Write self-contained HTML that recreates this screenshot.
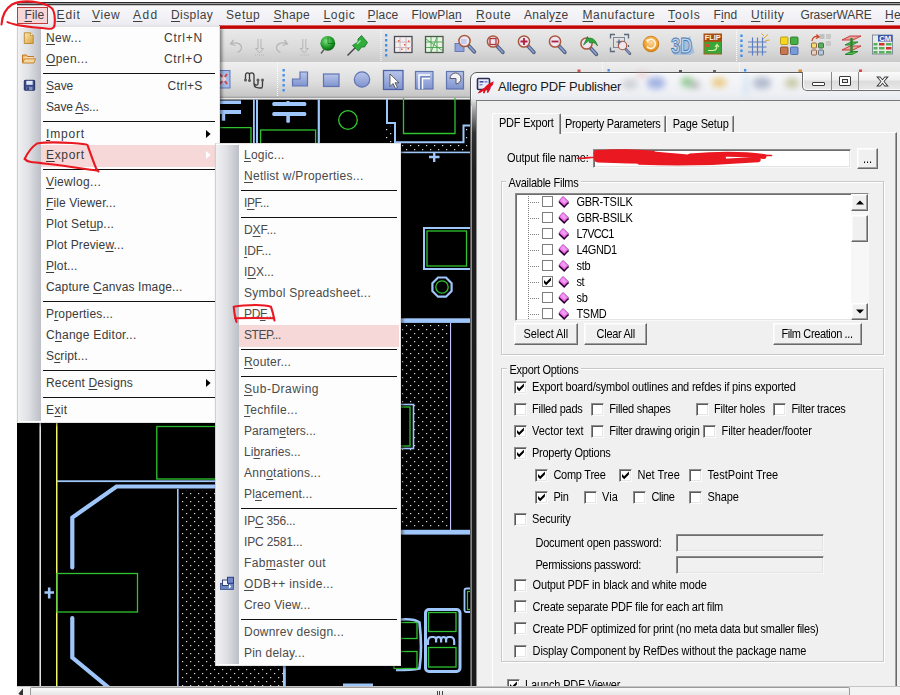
<!DOCTYPE html>
<html lang="en"><head><meta charset="utf-8"><title>Allegro PDF Publisher</title>
<style>

html,body{margin:0;padding:0;background:#fff;}
#root{position:relative;width:900px;height:695px;overflow:hidden;background:#fff;font-family:"Liberation Sans",sans-serif;}
#root div,#root span.t,#root svg{position:absolute;box-sizing:border-box;}
.t{white-space:nowrap;}
.m{font-family:"Liberation Sans",sans-serif;}
.d{font-family:"Liberation Sans",sans-serif;display:inline-block;transform:scaleY(1.12);transform-origin:50% 53%;}
u{text-decoration:underline;text-underline-offset:1.5px;text-decoration-thickness:1px;}
.sep{height:1px;background:#111;}
.cb{width:13px;height:13px;background:#fff;border:1px solid #8c8c8c;border-right-color:#fbfbfb;border-bottom-color:#fbfbfb;box-shadow:inset 1px 1px 0 #5a5a5a, inset -1px -1px 0 #e6e6e6;}
.cbg{background:#f0f0f0;}
.btn{background:#f0f0f0;border:1px solid #fff;border-right-color:#696969;border-bottom-color:#696969;box-shadow:inset -1px -1px 0 #a0a0a0, inset 1px 1px 0 #f8f8f8;}
.grp{border:1px solid #c8c8c8;box-shadow:inset 1px 1px 0 #fff, 1px 1px 0 #fff;}
.edit{border:1px solid #8a8a8a;border-right-color:#f8f8f8;border-bottom-color:#f8f8f8;box-shadow:inset 1px 1px 0 #6e6e6e, inset -1px -1px 0 #e4e4e4;}

</style></head>
<body><div id="root">
<!-- base -->
<div style="left:0px;top:0px;width:900px;height:6px;background:linear-gradient(#fff 0,#fff 1.6px,#2a2a2a 2.1px,#2a2a2a 2.9px,#a8a8a8 3.2px,#9a9a9a 3.8px,#3c3c3c 4.1px,#3c3c3c 5.2px,#f4f4f4 5.6px);"></div>
<div style="left:0px;top:0px;width:17px;height:695px;background:#fff;"></div>
<!-- canvas -->
<svg style="left:17px;top:98px" width="883" height="589" viewBox="17 98 883 589"><defs><pattern id="dots" x="2" y="1" width="8" height="8" patternUnits="userSpaceOnUse"><rect x="0" y="0" width="1.2" height="1.2" fill="#d8d8d8"/><rect x="4" y="4" width="1.2" height="1.2" fill="#d8d8d8"/></pattern></defs><rect x="17" y="98" width="883" height="589" fill="#000"/><rect x="219" y="98" width="260" height="1.6" fill="#e8e8e8"/><g fill="#9fc6fb"><rect x="219" y="100.5" width="22" height="3.5"/><rect x="219" y="110" width="22" height="4"/><rect x="221.7" y="113" width="3.5" height="7.7"/><rect x="253" y="99.5" width="1.8" height="44"/><rect x="256" y="99.5" width="2" height="44"/><rect x="272.3" y="102" width="34" height="4" rx="1.5"/><rect x="272.3" y="112" width="34" height="4" rx="1.5"/><rect x="286.3" y="114" width="3.6" height="8.7" rx="1"/><rect x="286.5" y="101" width="3" height="2"/><rect x="317.7" y="99.5" width="2.2" height="44"/></g><g fill="none" stroke="#2fc42f" stroke-width="1.3"><path d="M215 127.6H251V144"/><rect x="260.6" y="130" width="55" height="20"/><circle cx="348" cy="120" r="9.3"/><path d="M403.5 98V133.5H455V98"/></g><rect x="386" y="126" width="11" height="18" fill="url(#dots)"/><rect x="398" y="144" width="72" height="8" fill="url(#dots)"/><rect x="465" y="127" width="6" height="18" fill="url(#dots)"/><path d="M387 99V123H395V142.3H463.5V125.5H471" fill="none" stroke="#9fc6fb" stroke-width="2"/><rect x="398" y="151.6" width="73" height="1.6" fill="#9fc6fb"/><path d="M429 157H439.5M434.2 152.5V162" stroke="#9fc6fb" stroke-width="2.4" fill="none"/><rect x="424" y="228" width="48" height="41" fill="none" stroke="#9fc6fb" stroke-width="2"/><rect x="427" y="231" width="39.5" height="35" fill="none" stroke="#2fc42f" stroke-width="1.3"/><path d="M438 277.5h8l5.6 5.6v8l-5.6 5.6h-8l-5.6-5.6v-8z" fill="none" stroke="#9fc6fb" stroke-width="2.2"/><circle cx="442" cy="287" r="6.2" fill="none" stroke="#2fc42f" stroke-width="1.3"/><rect x="398" y="318.3" width="73" height="4.6" fill="#9fc6fb"/><rect x="401" y="324" width="48.5" height="205" fill="url(#dots)"/><rect x="450" y="323" width="1.1" height="207" fill="#c4c8ff"/><rect x="396" y="404.5" width="17.5" height="44" fill="#000" stroke="#9fc6fb" stroke-width="1.6"/><rect x="396" y="407" width="14" height="39" fill="none" stroke="#2fc42f" stroke-width="1.3"/><rect x="398" y="529.8" width="73" height="4.8" fill="#9fc6fb"/><rect x="425.5" y="609.5" width="34.5" height="62" rx="3.5" fill="none" stroke="#9fc6fb" stroke-width="3"/><rect x="428.5" y="612.5" width="27.5" height="19" fill="none" stroke="#2fc42f" stroke-width="1.3"/><rect x="428.5" y="647.5" width="27.5" height="19.5" fill="none" stroke="#2fc42f" stroke-width="1.3"/><path d="M428 645v-3.5c0-3 1.5-4.5 4-4.5h1.5c1.6 0 2.6 1 2.6 3v2.5v-2.5c0-2 1-3 2.5-3s2.5 1 2.5 3v2.5v-2.5c0-2 1-3 2.5-3s2.5 1 2.5 3v2.5v-2.5c0-2 1-3 2.6-3h1.5c2.500 0 4 1.5 4 4.500v3.500" fill="none" stroke="#9fc6fb" stroke-width="2.2"/><path d="M396 620C408 618.5 415 619 419.500 622.500C421.500 640 421.500 655 419.500 668.500C412 670 404 670 396 670" fill="none" stroke="#9fc6fb" stroke-width="2.600"/><rect x="394" y="622.5" width="23" height="16" fill="none" stroke="#2fc42f" stroke-width="1.3"/><rect x="394" y="651.5" width="23" height="17" fill="none" stroke="#2fc42f" stroke-width="1.3"/><rect x="464.5" y="588.5" width="9" height="23.500" rx="2" fill="none" stroke="#9fc6fb" stroke-width="1.8"/><rect x="467.5" y="591.5" width="6" height="18" fill="none" stroke="#2fc42f" stroke-width="1.2"/><rect x="39.500" y="420" width="1.400" height="267" fill="#fafafa"/><rect x="56" y="420" width="1.500" height="267" fill="#f4f468"/><rect x="57" y="480.3" width="160" height="1.8" fill="#9fc6fb"/><rect x="156.8" y="426.5" width="62" height="52.500" fill="none" stroke="#2fc42f" stroke-width="1.3"/><path d="M217 486.5H116.500L72.300 517.500V567.500" fill="none" stroke="#9fc6fb" stroke-width="4.2" stroke-linecap="round" stroke-linejoin="miter"/><path d="M72.300 618V657.500L108 687" fill="none" stroke="#9fc6fb" stroke-width="4.2" stroke-linecap="round" stroke-linejoin="miter"/><rect x="57" y="573.5" width="80.500" height="38.500" fill="none" stroke="#2fc42f" stroke-width="1.3"/><path d="M44.500 592.500H54M49.200 587.500V598.500" stroke="#9fc6fb" stroke-width="2.6" fill="none"/><rect x="177" y="489" width="1.6" height="198" fill="#9fc6fb"/><rect x="179.5" y="490" width="103.500" height="197" fill="url(#dots)"/><rect x="283" y="664" width="2.800" height="23" fill="#9fc6fb"/><rect x="343" y="683.500" width="30" height="3.500" fill="#9fc6fb"/></svg>
<!-- chrome -->
<div style="left:17px;top:6px;width:883px;height:20px;background:linear-gradient(#f9f9fc,#f1f1f6 60%,#eaeaf0);"></div>
<div style="left:219px;top:25px;width:681px;height:4px;background:linear-gradient(#ecd0d0 0,#c80808 22%,#c00000 84%,#dca0a0 100%);"></div>
<div style="left:219px;top:29px;width:681px;height:33px;background:linear-gradient(#e9e9e9,#dcdcdc 55%,#cacaca);"></div>
<div style="left:219px;top:62px;width:681px;height:36px;background:linear-gradient(#efefef,#dedede 55%,#c6c6c6 94%,#9a9a9a 100%);"></div>
<div style="left:17px;top:7px;width:31px;height:17px;background:#f6d6d6;border:1px solid #c23a3a;"></div>
<span class="t m" style="left:24.5px;top:7px;font-size:12px;line-height:16px;color:#3e3e3e;letter-spacing:0.147px;"><u>F</u>ile</span>
<span class="t m" style="left:56.5px;top:7px;font-size:12px;line-height:16px;color:#3e3e3e;letter-spacing:0.866px;"><u>E</u>dit</span>
<span class="t m" style="left:92px;top:7px;font-size:12px;line-height:16px;color:#3e3e3e;letter-spacing:0.663px;"><u>V</u>iew</span>
<span class="t m" style="left:133px;top:7px;font-size:12px;line-height:16px;color:#3e3e3e;letter-spacing:1.463px;"><u>A</u>dd</span>
<span class="t m" style="left:171px;top:7px;font-size:12px;line-height:16px;color:#3e3e3e;letter-spacing:0.407px;"><u>D</u>isplay</span>
<span class="t m" style="left:226px;top:7px;font-size:12px;line-height:16px;color:#3e3e3e;letter-spacing:0.602px;">Set<u>u</u>p</span>
<span class="t m" style="left:273.5px;top:7px;font-size:12px;line-height:16px;color:#3e3e3e;letter-spacing:0.395px;"><u>S</u>hape</span>
<span class="t m" style="left:323.5px;top:7px;font-size:12px;line-height:16px;color:#3e3e3e;letter-spacing:0.649px;"><u>L</u>ogic</span>
<span class="t m" style="left:367.5px;top:7px;font-size:12px;line-height:16px;color:#3e3e3e;letter-spacing:0.192px;"><u>P</u>lace</span>
<span class="t m" style="left:411.5px;top:7px;font-size:12px;line-height:16px;color:#3e3e3e;letter-spacing:0.132px;">FlowPla<u>n</u></span>
<span class="t m" style="left:476px;top:7px;font-size:12px;line-height:16px;color:#3e3e3e;letter-spacing:0.692px;"><u>R</u>oute</span>
<span class="t m" style="left:524px;top:7px;font-size:12px;line-height:16px;color:#3e3e3e;letter-spacing:0.264px;">Analy<u>z</u>e</span>
<span class="t m" style="left:582.5px;top:7px;font-size:12px;line-height:16px;color:#3e3e3e;letter-spacing:0.558px;"><u>M</u>anufacture</span>
<span class="t m" style="left:668px;top:7px;font-size:12px;line-height:16px;color:#3e3e3e;letter-spacing:0.946px;"><u>T</u>ools</span>
<span class="t m" style="left:713.5px;top:7px;font-size:12px;line-height:16px;color:#3e3e3e;letter-spacing:0.142px;">F<u>i</u>nd</span>
<span class="t m" style="left:751px;top:7px;font-size:12px;line-height:16px;color:#3e3e3e;letter-spacing:0.576px;"><u>U</u>tility</span>
<span class="t m" style="left:800.5px;top:7px;font-size:12px;line-height:16px;color:#3e3e3e;letter-spacing:-0.104px;">GraserWARE</span>
<span class="t m" style="left:885px;top:7px;font-size:12px;line-height:16px;color:#3e3e3e;letter-spacing:0.371px;"><u>H</u>elp</span>
<svg style="left:219px;top:29px" width="681" height="69" viewBox="219 29 681 69"><defs>
<linearGradient id="gb" x1="0" y1="0" x2="0" y2="1"><stop offset="0" stop-color="#b9c6ea"/><stop offset="1" stop-color="#7f93cf"/></linearGradient>
<radialGradient id="gg" cx="0.4" cy="0.35" r="0.7"><stop offset="0" stop-color="#7fe27f"/><stop offset="0.6" stop-color="#1f9a2a"/><stop offset="1" stop-color="#0b5a14"/></radialGradient>
<radialGradient id="go" cx="0.5" cy="0.4" r="0.6"><stop offset="0" stop-color="#ffd9a0"/><stop offset="0.7" stop-color="#f0a030"/><stop offset="1" stop-color="#d08010"/></radialGradient>
<g id="mag"><line x1="4" y1="4.500" x2="9.800" y2="10.800" stroke="#56607a" stroke-width="3.800" stroke-linecap="round"/><line x1="5" y1="5.500" x2="9.600" y2="10.500" stroke="#86a0d8" stroke-width="1.800" stroke-linecap="round"/><circle cx="0" cy="0" r="5.600" fill="#efe6f2" stroke="#a8583c" stroke-width="1.500"/></g>
<g id="dn" fill="none" stroke="#b4b4b4" stroke-width="1"><path d="M-1.500 -7V2.500H-4L0 7L4 2.500H1.500V-7"/><path d="M-4.500 9H4.500" stroke-dasharray="1 1"/></g>
</defs><line x1="381" y1="30" x2="381" y2="62" stroke="#fff" stroke-width="1" stroke-dasharray="1 1"/><rect x="385" y="34" width="2.300" height="2.500" fill="#3f8ef0"/><rect x="385" y="39" width="2.300" height="2.500" fill="#3f8ef0"/><rect x="385" y="44" width="2.300" height="2.500" fill="#3f8ef0"/><rect x="385" y="49" width="2.300" height="2.500" fill="#3f8ef0"/><rect x="385" y="54" width="2.300" height="2.500" fill="#3f8ef0"/><line x1="736.5" y1="30" x2="736.5" y2="62" stroke="#fff" stroke-width="1" stroke-dasharray="1 1"/><rect x="740.3" y="34.5" width="2.300" height="2.500" fill="#3f8ef0"/><rect x="740.3" y="39.5" width="2.300" height="2.500" fill="#3f8ef0"/><rect x="740.3" y="44.5" width="2.300" height="2.500" fill="#3f8ef0"/><rect x="740.3" y="49.5" width="2.300" height="2.500" fill="#3f8ef0"/><rect x="740.3" y="54.5" width="2.300" height="2.500" fill="#3f8ef0"/><line x1="277.5" y1="63" x2="277.5" y2="97" stroke="#fff" stroke-width="1" stroke-dasharray="1 1"/><rect x="282.5" y="69" width="2.300" height="2.500" fill="#3f8ef0"/><rect x="282.5" y="74" width="2.300" height="2.500" fill="#3f8ef0"/><rect x="282.5" y="79" width="2.300" height="2.500" fill="#3f8ef0"/><rect x="282.5" y="84" width="2.300" height="2.500" fill="#3f8ef0"/><rect x="282.5" y="89" width="2.300" height="2.500" fill="#3f8ef0"/><line x1="602.5" y1="63" x2="602.5" y2="97" stroke="#fff" stroke-width="1" stroke-dasharray="1 1"/><rect x="607.5" y="69" width="2.300" height="2.500" fill="#3f8ef0"/><rect x="607.5" y="74" width="2.300" height="2.500" fill="#3f8ef0"/><rect x="607.5" y="79" width="2.300" height="2.500" fill="#3f8ef0"/><rect x="607.5" y="84" width="2.300" height="2.500" fill="#3f8ef0"/><rect x="607.5" y="89" width="2.300" height="2.500" fill="#3f8ef0"/><line x1="739.5" y1="63" x2="739.5" y2="97" stroke="#fff" stroke-width="1" stroke-dasharray="1 1"/><rect x="744" y="69" width="2.300" height="2.500" fill="#3f8ef0"/><rect x="744" y="74" width="2.300" height="2.500" fill="#3f8ef0"/><rect x="744" y="79" width="2.300" height="2.500" fill="#3f8ef0"/><rect x="744" y="84" width="2.300" height="2.500" fill="#3f8ef0"/><rect x="744" y="89" width="2.300" height="2.500" fill="#3f8ef0"/><rect x="577.500" y="69.500" width="3" height="2.500" fill="#d05050"/><rect x="679" y="70" width="3" height="2" fill="#555"/><rect x="713" y="70" width="3" height="2" fill="#666"/><rect x="798.500" y="69.500" width="3.500" height="2.500" fill="#e09030"/><rect x="859" y="69.500" width="3" height="2.500" fill="#d04040"/><g fill="none" stroke="#b6b6b6" stroke-width="1.300"><path d="M233.500 40L230.500 44L235.500 45.500M231 43.800C236 41.500 241.500 43.500 241.500 47.500C241.500 50 240 51.500 237.500 52.500"/><path d="M284.500 40L287.500 44L282.500 45.500M287 43.800C282 41.500 276.500 43.500 276.500 47.500C276.500 50 278 51.500 280.500 52.500"/></g><use href="#dn" x="259.500" y="46"/><use href="#dn" x="304.300" y="46"/><line x1="321" y1="53.500" x2="324" y2="49.500" stroke="#555" stroke-width="1.300"/><circle cx="327.800" cy="43.300" r="7.400" fill="url(#gg)"/><path d="M328 37.500V43.500H333.500" stroke="#0a5a18" stroke-width="1" fill="none" opacity=".6"/><line x1="347.500" y1="55.500" x2="356" y2="47" stroke="#444" stroke-width="1.400"/><path d="M352.500 45.500L358.500 51L361.500 47L364.500 47L367.500 42.500L361.500 35.500L358 39L358 42Z" fill="#2fae3c" stroke="#157024" stroke-width=".8"/><path d="M357 44L360.500 40.500" stroke="#9ff0a8" stroke-width="1.200"/><rect x="394.500" y="36.500" width="17.500" height="16" fill="#f4f0f0" stroke="#4a4a58" stroke-width="1.300"/><path d="M400 37V52M406 37V52M395 42H412M395 47.500H412" stroke="#c8a8b8" stroke-width=".8"/><g fill="#e0603a"><rect x="398" y="40" width="1.500" height="1.500"/><rect x="404" y="44" width="1.500" height="1.500"/><rect x="408" y="40.500" width="1.500" height="1.500"/><rect x="401" y="48.500" width="1.500" height="1.500"/><rect x="407.500" y="48" width="1.500" height="1.500"/></g><rect x="425.500" y="36.500" width="17.500" height="16" fill="#e6f4e2" stroke="#4a5a4a" stroke-width="1.300"/><path d="M431 37V52M437 37V52M426 42H443M426 47.500H443M426 39L443 51M431 52L437 37" stroke="#4aa050" stroke-width=".9" fill="none"/><rect x="455" y="43.500" width="9" height="8" fill="#8fa4dc" stroke="#5a6aa8" stroke-width=".8"/><use href="#mag" x="464.500" y="41"/><rect x="461" y="39" width="5.500" height="5" fill="#b8c4ec" opacity=".8"/><use href="#mag" x="493" y="41.500"/><rect x="490" y="38.500" width="6" height="6" fill="none" stroke="#b03838" stroke-width="1.300"/><use href="#mag" x="524" y="41.500"/><path d="M520.500 41.500H527.500M524 38V45" stroke="#b02040" stroke-width="1.800"/><use href="#mag" x="555" y="41.500"/><path d="M551.500 41.500H558.500" stroke="#b02040" stroke-width="1.800"/><use href="#mag" x="586.500" y="43.500"/><path d="M583.500 45L589 40.500L589.500 43C593 42 596 43 597.500 46C596 40 592 37 588 38.500L587.500 36.500Z" fill="#2ea83a" stroke="#157024" stroke-width=".6"/><path d="M610.500 38.500V34.500H615M624 34.500H628.500V38.500M610.500 47.500V51.500H615M628.500 45V47" fill="none" stroke="#5a6a7a" stroke-width="1.300"/><rect x="613.500" y="37.500" width="11" height="10" fill="none" stroke="#7a8a9a" stroke-width="1"/><g transform="translate(622.500,45.500) scale(.75)"><use href="#mag"/></g><path d="M616.500 42H621.500M619 39.500V44.500" stroke="#4a5a7a" stroke-width="1.200"/><circle cx="651" cy="44" r="7.800" fill="url(#go)" stroke="#c87a10" stroke-width=".8"/><path d="M647.500 40.500A4.600 4.600 0 1 1 647 46.500" fill="none" stroke="#fff4e0" stroke-width="1.600"/><path d="M645.500 39.500L649.500 39.500L648 43Z" fill="#fff4e0"/><path d="M690 36L694.500 52.500L690 55H674L672 52Z" fill="#9ab8dc" opacity=".8"/><text x="671" y="53" font-family="Liberation Sans, sans-serif" font-weight="bold" font-size="22" textLength="21" lengthAdjust="spacingAndGlyphs" fill="#bcd4f0" stroke="#4a7ab0" stroke-width=".9">3D</text><rect x="703.500" y="33.500" width="18.500" height="7.500" fill="#a84c14"/><text x="704.800" y="40" font-family="Liberation Sans, sans-serif" font-weight="bold" font-size="7" textLength="16" lengthAdjust="spacingAndGlyphs" fill="#fff6e0">FLIP</text><rect x="704" y="41.500" width="17.500" height="12.500" fill="#3aa63a" stroke="#a06010" stroke-width="1"/><path d="M708 50.500H713C716 50.500 717 48.500 717 45.500M715 47L717 44.500L719 47" fill="none" stroke="#d8f0a0" stroke-width="1.200"/><rect x="706" y="44" width="4" height="3" fill="#d05030"/><path d="M752.500 37.500V55.500M757.500 37.500V55.500M762.500 37.500V55.500M748 42H766.500M748 47H766.500M748 52H766.500" stroke="#5f7fc0" stroke-width="1.200" fill="none"/><path d="M763 39L768 34.500M764 36L761.500 33.500M765.500 40.500L769.500 40" stroke="#e0a020" stroke-width="1"/><g stroke-width=".9"><rect x="780.500" y="37" width="7.500" height="7.500" fill="#f4d820" stroke="#b89810" rx="1"/><rect x="790.500" y="37" width="7.500" height="7.500" fill="#44b044" stroke="#2a7a2a" rx="1"/><rect x="780.500" y="47" width="7.500" height="7.500" fill="#c87850" stroke="#8a4a2a" rx="1"/><rect x="790.500" y="47" width="7.500" height="7.500" fill="#7a9ad8" stroke="#4a6aa8" rx="1"/></g><g stroke-width=".9"><rect x="819.500" y="34" width="5" height="5" fill="#c0c0c0"/><rect x="826" y="34" width="5" height="5" fill="#c8c8c8"/><rect x="826" y="41" width="5" height="5" fill="#c8c8c8"/><rect x="811.500" y="43" width="5" height="5" fill="#f0e070" stroke="#8a5a3a" rx="1"/><rect x="818.500" y="43" width="5" height="5" fill="#5ab05a" stroke="#3a6a3a" rx="1"/><rect x="811.500" y="50" width="5" height="5" fill="#e8d0c0" stroke="#8a5a3a" rx="1"/><rect x="818.500" y="50" width="5" height="5" fill="#b8c8d8" stroke="#5a6a7a" rx="1"/><path d="M812 41C812.500 37.500 814.500 36 818 36.500M816.500 34.500L819 36.800L816 38.500" fill="none" stroke="#d04020" stroke-width="1.300"/></g><g stroke-width=".9"><path d="M842 40L850 36H861L853 40Z" fill="#f0a0a0" stroke="#c03030"/><path d="M845 45L851 42H858L852 45Z" fill="#60c060" stroke="#208020"/><path d="M842 50L850 46H861L853 50Z" fill="#f0a0a0" stroke="#c03030"/><path d="M845 54.500L851 51.500H858L852 54.500Z" fill="#60c060" stroke="#208020"/><path d="M851.500 38V53" stroke="#2a8a2a" stroke-width="2.400"/></g><rect x="872.500" y="35" width="20" height="19" fill="#e8ece8" stroke="#6a7a8a" stroke-width=".8"/><rect x="878" y="35" width="14.500" height="6.500" fill="#3a5ab0"/><text x="879.200" y="41" font-family="Liberation Sans, sans-serif" font-weight="bold" font-size="7" textLength="12" lengthAdjust="spacingAndGlyphs" fill="#fff">CM</text><g fill="#58b058"><rect x="873.500" y="43" width="4" height="2.500"/><rect x="879" y="43" width="5.500" height="2.500" fill="#d03030"/><rect x="886" y="43" width="5.500" height="2.500"/><rect x="873.500" y="47" width="4" height="2.500"/><rect x="879" y="47" width="5.500" height="2.500"/><rect x="886" y="47" width="5.500" height="2.500" fill="#d03030"/><rect x="873.500" y="51" width="4" height="2.500"/><rect x="879" y="51" width="5.500" height="2.500"/><rect x="886" y="51" width="5.500" height="2.500"/></g><rect x="219" y="70.500" width="11" height="17.500" fill="#a8bce8" stroke="#5f78b8" stroke-width="1"/><path d="M220 74L227 84M227 74L220 84" stroke="#d04848" stroke-width="2"/><circle cx="223.500" cy="79" r="2.500" fill="#f0d8d8"/><path d="M245.500 79.500V75.500C245.500 72 249.500 72 249.500 75V80.500M249.500 75C249.500 72 254 72 254 75.500V84C254 88 258 88 261.500 88C262.500 88 262.500 86 262.500 84V80.500M258 80.500V83.500C258 85.500 256 85.500 254.500 84" fill="none" stroke="#3a3a3a" stroke-width="1.300"/><g fill="#5a5a5a"><circle cx="245.500" cy="80" r="1.500"/><circle cx="249.500" cy="80.500" r="1.500"/><circle cx="258" cy="80" r="1.500"/><circle cx="262.500" cy="80" r="1.500"/></g><path d="M300 72H307.500V86H292.500V79H300Z" fill="url(#gb)" stroke="#5f74b0" stroke-width="1.200"/><rect x="323.500" y="74" width="15.500" height="12.500" fill="url(#gb)" stroke="#5f74b0" stroke-width="1.200"/><circle cx="362" cy="79.500" r="7.700" fill="url(#gb)" stroke="#5f74b0" stroke-width="1.200"/><rect x="383.500" y="70.500" width="19.500" height="19" fill="url(#gb)" stroke="#4f64a8" stroke-width="1.300"/><path d="M390 74V86.500L393 83.500L395.500 88.500L397.500 87.500L395 82.800H399Z" fill="#fff" stroke="#444" stroke-width=".8"/><rect x="415.500" y="71.500" width="17.500" height="17.500" fill="url(#gb)" stroke="#5f74b0" stroke-width="1.200"/><path d="M419 89V75H430M422.500 89V78.500H430" fill="none" stroke="#fff" stroke-width="1.400"/><path d="M420.800 89V76.800H430" fill="none" stroke="#5f74b0" stroke-width="1"/><rect x="446.500" y="71.500" width="17" height="17.500" fill="url(#gb)" stroke="#5f74b0" stroke-width="1.200"/><path d="M450 78.500A5.500 5.500 0 1 1 456 84V78.500Z" fill="#f4f4f8" stroke="#5a5a6a" stroke-width="1"/></svg>
<!-- menus -->
<div style="left:17px;top:25.5px;width:202.5px;height:397px;background:#fdfdfd;box-shadow:2px 2px 3px rgba(0,0,0,.45);border:1px solid #e4e4e4;border-left-color:#d0d0d0;"></div>
<div style="left:18px;top:27.5px;width:23px;height:393px;background:linear-gradient(90deg,#f1f1f3,#dfe1e5 45%,#bcbfc6);"></div>
<span class="t m" style="left:46px;top:30px;font-size:12px;line-height:16px;color:#3a3a3a;letter-spacing:0.388px;"><u>N</u>ew...</span>
<span class="t m" style="left:164px;top:30px;font-size:12px;line-height:16px;color:#3a3a3a;letter-spacing:0.791px;">Ctrl+N</span>
<span class="t m" style="left:46px;top:51px;font-size:12px;line-height:16px;color:#3a3a3a;letter-spacing:0.404px;"><u>O</u>pen...</span>
<span class="t m" style="left:164px;top:51px;font-size:12px;line-height:16px;color:#3a3a3a;letter-spacing:0.657px;">Ctrl+O</span>
<div style="left:43px;top:73px;width:172px;height:1px;background:#111;"></div>
<span class="t m" style="left:46px;top:78px;font-size:12px;line-height:16px;color:#3a3a3a;letter-spacing:-0.025px;"><u>S</u>ave</span>
<span class="t m" style="left:167.5px;top:78px;font-size:12px;line-height:16px;color:#3a3a3a;letter-spacing:0.222px;">Ctrl+S</span>
<span class="t m" style="left:46px;top:99px;font-size:12px;line-height:16px;color:#3a3a3a;letter-spacing:-0.140px;">Save <u>A</u>s...</span>
<div style="left:43px;top:121px;width:172px;height:1px;background:#111;"></div>
<span class="t m" style="left:46px;top:126px;font-size:12px;line-height:16px;color:#3a3a3a;letter-spacing:0.814px;"><u>I</u>mport</span>
<svg style="left:205.5px;top:130px" width="5" height="8" viewBox="0 0 5 8"><path d="M0 0L4.6 4L0 8Z" fill="#000"/></svg>
<div style="left:41px;top:144.5px;width:177px;height:22px;background:#f6d8d8;"></div>
<span class="t m" style="left:46px;top:147px;font-size:12px;line-height:16px;color:#3a3a3a;letter-spacing:0.679px;"><u>E</u>xport</span>
<svg style="left:205.5px;top:151px" width="5" height="8" viewBox="0 0 5 8"><path d="M0 0L4.6 4L0 8Z" fill="#fff"/></svg>
<div style="left:43px;top:169px;width:172px;height:1px;background:#111;"></div>
<span class="t m" style="left:46px;top:174px;font-size:12px;line-height:16px;color:#3a3a3a;letter-spacing:0.330px;"><u>V</u>iewlog...</span>
<span class="t m" style="left:46px;top:195px;font-size:12px;line-height:16px;color:#3a3a3a;letter-spacing:0.100px;"><u>F</u>ile Viewer...</span>
<span class="t m" style="left:46px;top:216px;font-size:12px;line-height:16px;color:#3a3a3a;letter-spacing:0.199px;">Plot Set<u>u</u>p...</span>
<span class="t m" style="left:46px;top:237px;font-size:12px;line-height:16px;color:#3a3a3a;letter-spacing:0.124px;">Plot Previe<u>w</u>...</span>
<span class="t m" style="left:46px;top:258px;font-size:12px;line-height:16px;color:#3a3a3a;letter-spacing:0.099px;"><u>P</u>lot...</span>
<span class="t m" style="left:46px;top:279px;font-size:12px;line-height:16px;color:#3a3a3a;letter-spacing:0.131px;">Capture <u>C</u>anvas Image...</span>
<div style="left:43px;top:301px;width:172px;height:1px;background:#111;"></div>
<span class="t m" style="left:46px;top:306px;font-size:12px;line-height:16px;color:#3a3a3a;letter-spacing:0.173px;">P<u>r</u>operties...</span>
<span class="t m" style="left:46px;top:327px;font-size:12px;line-height:16px;color:#3a3a3a;letter-spacing:0.281px;">C<u>h</u>ange Editor...</span>
<span class="t m" style="left:46px;top:348px;font-size:12px;line-height:16px;color:#3a3a3a;letter-spacing:0.139px;">S<u>c</u>ript...</span>
<div style="left:43px;top:370px;width:172px;height:1px;background:#111;"></div>
<span class="t m" style="left:46px;top:375px;font-size:12px;line-height:16px;color:#3a3a3a;letter-spacing:0.160px;">Recent <u>D</u>esigns</span>
<svg style="left:205.5px;top:379px" width="5" height="8" viewBox="0 0 5 8"><path d="M0 0L4.6 4L0 8Z" fill="#000"/></svg>
<div style="left:43px;top:397px;width:172px;height:1px;background:#111;"></div>
<span class="t m" style="left:46px;top:402px;font-size:12px;line-height:16px;color:#3a3a3a;letter-spacing:0.395px;">E<u>x</u>it</span>
<div style="left:215px;top:142.5px;width:185.5px;height:523.5px;background:#fdfdfd;box-shadow:2px 2px 3px rgba(0,0,0,.45);border:1px solid #e4e4e4;border-left-color:#d0d0d0;"></div>
<div style="left:216px;top:144.5px;width:22.5px;height:519.5px;background:linear-gradient(90deg,#f1f1f3,#dfe1e5 45%,#bcbfc6);"></div>
<span class="t m" style="left:244px;top:147px;font-size:12px;line-height:16px;color:#4a4a4a;letter-spacing:0.228px;"><u>L</u>ogic...</span>
<span class="t m" style="left:244px;top:168px;font-size:12px;line-height:16px;color:#4a4a4a;letter-spacing:0.269px;"><u>N</u>etlist w/Properties...</span>
<div style="left:241px;top:190px;width:156px;height:1px;background:#111;"></div>
<span class="t m" style="left:244px;top:195px;font-size:12px;line-height:16px;color:#4a4a4a;letter-spacing:-0.415px;">I<u>P</u>F...</span>
<div style="left:241px;top:217px;width:156px;height:1px;background:#111;"></div>
<span class="t m" style="left:244px;top:222px;font-size:12px;line-height:16px;color:#4a4a4a;letter-spacing:-0.081px;">D<u>X</u>F...</span>
<span class="t m" style="left:244px;top:243px;font-size:12px;line-height:16px;color:#4a4a4a;letter-spacing:-0.143px;"><u>I</u>DF...</span>
<span class="t m" style="left:244px;top:264px;font-size:12px;line-height:16px;color:#4a4a4a;letter-spacing:-0.046px;">I<u>D</u>X...</span>
<span class="t m" style="left:244px;top:285px;font-size:12px;line-height:16px;color:#4a4a4a;letter-spacing:0.270px;">Symbol Spreadsheet...</span>
<span class="t m" style="left:244px;top:306px;font-size:12px;line-height:16px;color:#4a4a4a;letter-spacing:-0.377px;">PD<u>F</u>...</span>
<div style="left:239px;top:324.5px;width:159.5px;height:22px;background:#f6d8d8;"></div>
<span class="t m" style="left:244px;top:327px;font-size:12px;line-height:16px;color:#4a4a4a;letter-spacing:-0.416px;">STEP...</span>
<div style="left:241px;top:349px;width:156px;height:1px;background:#111;"></div>
<span class="t m" style="left:244px;top:354px;font-size:12px;line-height:16px;color:#4a4a4a;letter-spacing:0.178px;"><u>R</u>outer...</span>
<div style="left:241px;top:376px;width:156px;height:1px;background:#111;"></div>
<span class="t m" style="left:244px;top:381px;font-size:12px;line-height:16px;color:#4a4a4a;letter-spacing:0.512px;"><u>S</u>ub-Drawing</span>
<span class="t m" style="left:244px;top:402px;font-size:12px;line-height:16px;color:#4a4a4a;letter-spacing:0.280px;"><u>T</u>echfile...</span>
<span class="t m" style="left:244px;top:423px;font-size:12px;line-height:16px;color:#4a4a4a;letter-spacing:-0.021px;">Param<u>e</u>ters...</span>
<span class="t m" style="left:244px;top:444px;font-size:12px;line-height:16px;color:#4a4a4a;letter-spacing:0.050px;">Li<u>b</u>raries...</span>
<span class="t m" style="left:244px;top:465px;font-size:12px;line-height:16px;color:#4a4a4a;letter-spacing:0.261px;">Ann<u>o</u>tations...</span>
<span class="t m" style="left:244px;top:486px;font-size:12px;line-height:16px;color:#4a4a4a;letter-spacing:0.144px;">Pl<u>a</u>cement...</span>
<div style="left:241px;top:508px;width:156px;height:1px;background:#111;"></div>
<span class="t m" style="left:244px;top:513px;font-size:12px;line-height:16px;color:#4a4a4a;letter-spacing:-0.208px;">IP<u>C</u> 356...</span>
<span class="t m" style="left:244px;top:534px;font-size:12px;line-height:16px;color:#4a4a4a;letter-spacing:-0.145px;">IPC 2581...</span>
<span class="t m" style="left:244px;top:555px;font-size:12px;line-height:16px;color:#4a4a4a;letter-spacing:0.351px;">Fab<u>m</u>aster out</span>
<span class="t m" style="left:244px;top:576px;font-size:12px;line-height:16px;color:#4a4a4a;letter-spacing:0.327px;"><u>O</u>DB++ inside...</span>
<span class="t m" style="left:244px;top:597px;font-size:12px;line-height:16px;color:#4a4a4a;letter-spacing:0.165px;">Creo View...</span>
<div style="left:241px;top:619px;width:156px;height:1px;background:#111;"></div>
<span class="t m" style="left:244px;top:624px;font-size:12px;line-height:16px;color:#4a4a4a;letter-spacing:0.235px;">Downrev design...</span>
<span class="t m" style="left:244px;top:645px;font-size:12px;line-height:16px;color:#4a4a4a;letter-spacing:0.211px;">Pin delay...</span>
<svg style="left:20px;top:30px" width="20" height="64" viewBox="20 30 20 64">
<defs><linearGradient id="gy" x1="0" y1="0" x2="1" y2="1"><stop offset="0" stop-color="#fbeab0"/><stop offset="1" stop-color="#d8a040"/></linearGradient></defs>
<path d="M24.300 32.800H30.500L33.200 35.500V43.500H24.300Z" fill="url(#gy)" stroke="#b8862c" stroke-width=".9"/><path d="M30.500 32.800V35.500H33.200" fill="#fff8e0" stroke="#b8862c" stroke-width=".7"/>
<path d="M22.500 63V55H26.500L27.500 56.500H33.500V58" fill="#f0c070" stroke="#c07820" stroke-width="1"/><path d="M24.500 57.500H34V61H24.500Z" fill="#fff"/><path d="M22.500 63L24.500 58.800H35.500L33.800 63Z" fill="#f4d8a0" stroke="#c07820" stroke-width=".9"/>
<rect x="24.300" y="80.300" width="10.400" height="10" rx=".8" fill="#3a4a8a" stroke="#1a2458" stroke-width=".9"/><rect x="26.300" y="80.800" width="6.400" height="4" fill="#dfe6f6"/><rect x="26.500" y="86.800" width="6" height="3.500" fill="#8090c0"/><rect x="27.300" y="87.300" width="1.500" height="2.500" fill="#1a2458"/>
</svg>
<svg style="left:219px;top:575px" width="17" height="17" viewBox="219 575 17 17">
<rect x="220.500" y="583.500" width="13" height="6" fill="#6a86c0" stroke="#3a4a8a" stroke-width=".8"/><rect x="222.500" y="580" width="6" height="5.500" fill="#f2f4fa" stroke="#2a3468" stroke-width=".9"/><rect x="227.500" y="577.300" width="6" height="6" fill="#7088c8" stroke="#2a3a8a" stroke-width="1"/><path d="M229 586.500L231.500 584.300V588.700Z" fill="#fff" transform="rotate(180 230.200 586.500)"/>
</svg>
<!-- dialog -->
<div style="left:469.5px;top:71.5px;width:440px;height:640px;border-radius:7px 0 0 0;background:linear-gradient(#f6f7f9,#eef0f4 20px,#e6e9ee 28px);border:1px solid #5a5a5a;box-shadow:inset 1px 1px 0 #fff;"></div>
<div style="left:470.5px;top:99px;width:6.5px;height:600px;background:linear-gradient(#e4e6ea 0,#9a9ca0 12px,#303032 34px,#1e1e1e 70px,#1a1a1a 100%);"></div>
<div style="left:470.5px;top:106px;width:1px;height:600px;background:linear-gradient(#e8e8e8,#909090 40px,#808080);"></div>
<div style="left:476px;top:99.5px;width:430px;height:600px;background:#f0f0f0;border-left:1px solid #8e8e8e;border-top:1px solid #777;"></div>
<div style="left:622px;top:79px;width:16px;height:10px;background:#b8bcc4;opacity:0.6;filter:blur(3px);border-radius:40%;"></div>
<div style="left:647px;top:77px;width:18px;height:12px;background:#8fa4e0;opacity:0.8;filter:blur(3px);border-radius:40%;"></div>
<div style="left:681px;top:77px;width:12px;height:10px;background:#6cbc6c;opacity:0.7;filter:blur(3px);border-radius:40%;"></div>
<div style="left:690px;top:81px;width:10px;height:8px;background:#8a8a8a;opacity:0.5;filter:blur(3px);border-radius:40%;"></div>
<div style="left:712px;top:78px;width:14px;height:9px;background:#e8b850;opacity:0.7;filter:blur(3px);border-radius:40%;"></div>
<div style="left:745px;top:72px;width:2px;height:24px;background:#a8c8f4;opacity:0.9;filter:blur(3px);border-radius:40%;"></div>
<div style="left:753px;top:77px;width:18px;height:12px;background:#9aa6c0;opacity:0.7;filter:blur(3px);border-radius:40%;"></div>
<div style="left:785px;top:78px;width:14px;height:10px;background:#b8b888;opacity:0.7;filter:blur(3px);border-radius:40%;"></div>
<div style="left:858px;top:73px;width:8px;height:8px;background:#e89090;opacity:0.6;filter:blur(3px);border-radius:40%;"></div>
<div style="left:886px;top:75px;width:12px;height:10px;background:#f0d890;opacity:0.7;filter:blur(3px);border-radius:40%;"></div>
<div style="left:636px;top:72px;width:12px;height:5px;background:#e0a0a0;opacity:0.5;filter:blur(3px);border-radius:40%;"></div>
<span class="t m" style="left:498px;top:77.5px;font-size:13px;line-height:18px;color:#1a1a1a;letter-spacing:-0.225px;">Allegro PDF Publisher</span>
<svg style="left:476px;top:77px" width="19" height="18" viewBox="0 0 19 18">
<rect x="1.5" y="1.5" width="12" height="11" rx="1" fill="#e8ecf8" stroke="#2c2c58" stroke-width="1.6"/>
<rect x="3.5" y="4" width="4" height="1.6" fill="#4a4a9a"/><rect x="8.5" y="4" width="3" height="1.6" fill="#7a8ad0"/>
<rect x="3.5" y="7" width="3" height="1.4" fill="#7a8ad0"/>
<path d="M1.500 16.500L4 13.200L8 11L11 8L14 6L17.800 4.200L16.800 8L14.800 10L13.800 13L12.200 15.800H10.800L11.400 12.600L9.600 13.600L8.600 16.200H7L7.400 13.800L4.500 15.800Z" fill="#e01020"/>
</svg>
<div style="left:802px;top:71.5px;width:110px;height:19.5px;border-radius:0 0 0 5px;border:1px solid #6e6e6e;border-top:none;background:linear-gradient(#fbfbfb,#eeeeee 45%,#dcdcdc 50%,#e8e8e8);box-shadow:inset 1px -1px 0 rgba(255,255,255,.8);"></div>
<div style="left:831px;top:72px;width:1px;height:18.5px;background:#8a8a8a;"></div>
<div style="left:858px;top:72px;width:1px;height:18.5px;background:#8a8a8a;"></div>
<div style="left:811.5px;top:81.5px;width:13px;height:4.5px;background:#fff;border:1px solid #3a3a3a;border-radius:1px;"></div>
<div style="left:838.5px;top:75.5px;width:12px;height:10.5px;background:#fff;border:1px solid #3a3a3a;border-radius:1px;"></div>
<div style="left:841.5px;top:78.5px;width:6px;height:4.5px;background:#e8e8e8;border:1px solid #3a3a3a;"></div>
<svg style="left:875.5px;top:75.5px" width="13" height="11" viewBox="0 0 17 12" preserveAspectRatio="none"><path d="M1.5 1h4l3 3.2 3-3.2h4l-5 5 5 5h-4l-3-3.2-3 3.2h-4l5-5z" fill="#fff" stroke="#3a3a3a" stroke-width="1.1"/></svg>
<div style="left:492px;top:132px;width:405px;height:600px;background:#f0f0f0;border-top:1px solid #fff;border-left:1px solid #fff;border-right:1px solid #696969;box-shadow:inset -1px 0 0 #a0a0a0;"></div>
<div style="left:560px;top:115px;width:105.5px;height:17px;background:#f0f0f0;border-top:1px solid #fff;border-left:1px solid #fff;border-right:1px solid #696969;border-radius:2px 2px 0 0;box-shadow:inset -1px 0 0 #a0a0a0;"></div>
<div style="left:665.5px;top:115px;width:68px;height:17px;background:#f0f0f0;border-top:1px solid #fff;border-left:1px solid #fff;border-right:1px solid #696969;border-radius:2px 2px 0 0;box-shadow:inset -1px 0 0 #a0a0a0;"></div>
<div style="left:492px;top:113px;width:69px;height:20.5px;background:#f0f0f0;border-top:1px solid #fff;border-left:1px solid #fff;border-right:1px solid #696969;border-radius:2px 2px 0 0;box-shadow:inset -1px 0 0 #a0a0a0;"></div>
<span class="t d" style="left:499px;top:115.5px;font-size:11px;line-height:14px;color:#000;letter-spacing:-0.229px;">PDF Export</span>
<span class="t d" style="left:565px;top:117px;font-size:11px;line-height:14px;color:#000;letter-spacing:-0.316px;">Property Parameters</span>
<span class="t d" style="left:672.7px;top:117px;font-size:11px;line-height:14px;color:#000;letter-spacing:-0.156px;">Page Setup</span>
<span class="t d" style="left:507px;top:151px;font-size:11px;line-height:14px;color:#000;letter-spacing:-0.124px;">Output file name:</span>
<div class="edit" style="left:592.5px;top:149px;width:258.5px;height:18.5px;background:#fff;"></div>
<div class="btn" style="left:857px;top:148px;width:21px;height:20.5px;"></div>
<span class="t d" style="left:863px;top:151.5px;font-size:11px;line-height:14px;color:#000;">...</span>
<div class="grp" style="left:500.5px;top:181px;width:383px;height:173.5px;"></div>
<div style="left:505.6px;top:175px;width:75.39999999999998px;height:13px;background:#f0f0f0;"></div>
<span class="t d" style="left:508.6px;top:175.5px;font-size:11px;line-height:14px;color:#000;letter-spacing:-0.256px;">Available Films</span>
<div class="edit" style="left:515px;top:193px;width:353.5px;height:127.5px;background:#fff;"></div>
<div style="left:528px;top:195px;width:1px;height:124px;background:repeating-linear-gradient(#fff 0,#fff 1px,#808080 1px,#808080 2px);"></div>
<div style="left:529px;top:202px;width:11px;height:1px;background:repeating-linear-gradient(90deg,#fff 0,#fff 1px,#808080 1px,#808080 2px);"></div>
<div style="left:542px;top:196px;width:11px;height:11px;background:#fff;border:1px solid #7e7e7e;"></div>
<svg style="left:557.5px;top:196px" width="12" height="12" viewBox="0 0 12 12"><path d="M5 0.300L10.600 5.400V7.200L6.200 12L0.800 6.800V4.800Z" fill="#2a002a"/><path d="M5 0.300L10.600 5.400L6.200 9.800L0.800 4.800Z" fill="#ec6cec"/><path d="M5 1.600L8.800 5.200L6.200 7.800L2.600 4.600Z" fill="#f49af4"/></svg>
<span class="t d" style="left:576.4px;top:195px;font-size:11px;line-height:14px;color:#000;letter-spacing:-0.210px;">GBR-TSILK</span>
<div style="left:529px;top:218px;width:11px;height:1px;background:repeating-linear-gradient(90deg,#fff 0,#fff 1px,#808080 1px,#808080 2px);"></div>
<div style="left:542px;top:212px;width:11px;height:11px;background:#fff;border:1px solid #7e7e7e;"></div>
<svg style="left:557.5px;top:212px" width="12" height="12" viewBox="0 0 12 12"><path d="M5 0.300L10.600 5.400V7.200L6.200 12L0.800 6.800V4.800Z" fill="#2a002a"/><path d="M5 0.300L10.600 5.400L6.200 9.800L0.800 4.800Z" fill="#ec6cec"/><path d="M5 1.600L8.800 5.200L6.200 7.800L2.600 4.600Z" fill="#f49af4"/></svg>
<span class="t d" style="left:576.4px;top:211px;font-size:11px;line-height:14px;color:#000;letter-spacing:-0.286px;">GBR-BSILK</span>
<div style="left:529px;top:234px;width:11px;height:1px;background:repeating-linear-gradient(90deg,#fff 0,#fff 1px,#808080 1px,#808080 2px);"></div>
<div style="left:542px;top:228px;width:11px;height:11px;background:#fff;border:1px solid #7e7e7e;"></div>
<svg style="left:557.5px;top:228px" width="12" height="12" viewBox="0 0 12 12"><path d="M5 0.300L10.600 5.400V7.200L6.200 12L0.800 6.800V4.800Z" fill="#2a002a"/><path d="M5 0.300L10.600 5.400L6.200 9.800L0.800 4.800Z" fill="#ec6cec"/><path d="M5 1.600L8.800 5.200L6.200 7.800L2.600 4.600Z" fill="#f49af4"/></svg>
<span class="t d" style="left:576.4px;top:227px;font-size:11px;line-height:14px;color:#000;letter-spacing:-0.716px;">L7VCC1</span>
<div style="left:529px;top:250px;width:11px;height:1px;background:repeating-linear-gradient(90deg,#fff 0,#fff 1px,#808080 1px,#808080 2px);"></div>
<div style="left:542px;top:244px;width:11px;height:11px;background:#fff;border:1px solid #7e7e7e;"></div>
<svg style="left:557.5px;top:244px" width="12" height="12" viewBox="0 0 12 12"><path d="M5 0.300L10.600 5.400V7.200L6.200 12L0.800 6.800V4.800Z" fill="#2a002a"/><path d="M5 0.300L10.600 5.400L6.200 9.800L0.800 4.800Z" fill="#ec6cec"/><path d="M5 1.600L8.800 5.200L6.200 7.800L2.600 4.600Z" fill="#f49af4"/></svg>
<span class="t d" style="left:576.4px;top:243px;font-size:11px;line-height:14px;color:#000;letter-spacing:-0.419px;">L4GND1</span>
<div style="left:529px;top:266px;width:11px;height:1px;background:repeating-linear-gradient(90deg,#fff 0,#fff 1px,#808080 1px,#808080 2px);"></div>
<div style="left:542px;top:260px;width:11px;height:11px;background:#fff;border:1px solid #7e7e7e;"></div>
<svg style="left:557.5px;top:260px" width="12" height="12" viewBox="0 0 12 12"><path d="M5 0.300L10.600 5.400V7.200L6.200 12L0.800 6.800V4.800Z" fill="#2a002a"/><path d="M5 0.300L10.600 5.400L6.200 9.800L0.800 4.800Z" fill="#ec6cec"/><path d="M5 1.600L8.800 5.200L6.200 7.800L2.600 4.600Z" fill="#f49af4"/></svg>
<span class="t d" style="left:576.4px;top:259px;font-size:11px;line-height:14px;color:#000;letter-spacing:-0.244px;">stb</span>
<div style="left:529px;top:282px;width:11px;height:1px;background:repeating-linear-gradient(90deg,#fff 0,#fff 1px,#808080 1px,#808080 2px);"></div>
<div style="left:542px;top:276px;width:11px;height:11px;background:#fff;border:1px solid #7e7e7e;"><svg style="left:0.3px;top:0.2px" width="9" height="9" viewBox="0 0 9 9"><path d="M1 3v3l2.200 2.200l4.700-4.700v-3l-4.700 4.700z" fill="#000"/></svg></div>
<svg style="left:557.5px;top:276px" width="12" height="12" viewBox="0 0 12 12"><path d="M5 0.300L10.600 5.400V7.200L6.200 12L0.800 6.800V4.800Z" fill="#2a002a"/><path d="M5 0.300L10.600 5.400L6.200 9.800L0.800 4.800Z" fill="#ec6cec"/><path d="M5 1.600L8.800 5.200L6.200 7.800L2.600 4.600Z" fill="#f49af4"/></svg>
<span class="t d" style="left:576.4px;top:275px;font-size:11px;line-height:14px;color:#000;letter-spacing:-0.363px;">st</span>
<div style="left:529px;top:298px;width:11px;height:1px;background:repeating-linear-gradient(90deg,#fff 0,#fff 1px,#808080 1px,#808080 2px);"></div>
<div style="left:542px;top:292px;width:11px;height:11px;background:#fff;border:1px solid #7e7e7e;"></div>
<svg style="left:557.5px;top:292px" width="12" height="12" viewBox="0 0 12 12"><path d="M5 0.300L10.600 5.400V7.200L6.200 12L0.800 6.800V4.800Z" fill="#2a002a"/><path d="M5 0.300L10.600 5.400L6.200 9.800L0.800 4.800Z" fill="#ec6cec"/><path d="M5 1.600L8.800 5.200L6.200 7.800L2.600 4.600Z" fill="#f49af4"/></svg>
<span class="t d" style="left:576.4px;top:291px;font-size:11px;line-height:14px;color:#000;letter-spacing:-0.225px;">sb</span>
<div style="left:529px;top:314px;width:11px;height:1px;background:repeating-linear-gradient(90deg,#fff 0,#fff 1px,#808080 1px,#808080 2px);"></div>
<div style="left:542px;top:308px;width:11px;height:11px;background:#fff;border:1px solid #7e7e7e;"></div>
<svg style="left:557.5px;top:308px" width="12" height="12" viewBox="0 0 12 12"><path d="M5 0.300L10.600 5.400V7.200L6.200 12L0.800 6.800V4.800Z" fill="#2a002a"/><path d="M5 0.300L10.600 5.400L6.200 9.800L0.800 4.800Z" fill="#ec6cec"/><path d="M5 1.600L8.800 5.200L6.200 7.800L2.600 4.600Z" fill="#f49af4"/></svg>
<span class="t d" style="left:576.4px;top:307px;font-size:11px;line-height:14px;color:#000;letter-spacing:-0.257px;">TSMD</span>
<div style="left:851px;top:194px;width:16.5px;height:125.5px;background:#f7f7f7;"></div>
<div class="btn" style="left:851px;top:194px;width:16.5px;height:16.5px;"></div>
<div class="btn" style="left:851px;top:215px;width:16.5px;height:27px;"></div>
<div class="btn" style="left:851px;top:303px;width:16.5px;height:16.5px;"></div>
<svg style="left:855.5px;top:199.5px" width="8" height="5" viewBox="0 0 8 5"><path d="M0 4.5L4 0.5L8 4.5Z" fill="#000"/></svg>
<svg style="left:855.5px;top:309px" width="8" height="5" viewBox="0 0 8 5"><path d="M0 0.5L4 4.5L8 0.5Z" fill="#000"/></svg>
<div class="btn" style="left:514px;top:323px;width:63.5px;height:21.5px;"></div>
<span class="t d" style="left:523.4px;top:326.5px;font-size:11px;line-height:14px;color:#000;letter-spacing:-0.050px;">Select All</span>
<div class="btn" style="left:584px;top:323px;width:63px;height:21.5px;"></div>
<span class="t d" style="left:596.6px;top:326.5px;font-size:11px;line-height:14px;color:#000;letter-spacing:-0.296px;">Clear All</span>
<div class="btn" style="left:773px;top:323px;width:89px;height:21.5px;"></div>
<span class="t d" style="left:781.4px;top:326.5px;font-size:11px;line-height:14px;color:#000;letter-spacing:-0.378px;">Film Creation ...</span>
<div class="grp" style="left:500.5px;top:368px;width:383px;height:294px;"></div>
<div style="left:506.5px;top:362px;width:74.5px;height:13px;background:#f0f0f0;"></div>
<span class="t d" style="left:509.5px;top:362.5px;font-size:11px;line-height:14px;color:#000;letter-spacing:-0.267px;">Export Options</span>
<div class="cb" style="left:514px;top:381px;width:13px;height:13px;"><svg style="left:0.8px;top:1px" width="9" height="9" viewBox="0 0 9 9"><path d="M1 3v3l2.200 2.200l4.700-4.700v-3l-4.700 4.700z" fill="#000"/></svg></div>
<span class="t d" style="left:532px;top:380px;font-size:11px;line-height:14px;color:#000;letter-spacing:-0.195px;">Export board/symbol outlines and refdes if pins exported</span>
<div class="cb" style="left:514px;top:403px;width:13px;height:13px;"></div>
<span class="t d" style="left:532px;top:402px;font-size:11px;line-height:14px;color:#000;letter-spacing:-0.240px;">Filled pads</span>
<div class="cb" style="left:591px;top:403px;width:13px;height:13px;"></div>
<span class="t d" style="left:609.3px;top:402px;font-size:11px;line-height:14px;color:#000;letter-spacing:-0.277px;">Filled shapes</span>
<div class="cb" style="left:696px;top:403px;width:13px;height:13px;"></div>
<span class="t d" style="left:714px;top:402px;font-size:11px;line-height:14px;color:#000;letter-spacing:-0.236px;">Filter holes</span>
<div class="cb" style="left:773px;top:403px;width:13px;height:13px;"></div>
<span class="t d" style="left:791.4px;top:402px;font-size:11px;line-height:14px;color:#000;letter-spacing:-0.256px;">Filter traces</span>
<div class="cb" style="left:514px;top:425px;width:13px;height:13px;"><svg style="left:0.8px;top:1px" width="9" height="9" viewBox="0 0 9 9"><path d="M1 3v3l2.200 2.200l4.700-4.700v-3l-4.700 4.700z" fill="#000"/></svg></div>
<span class="t d" style="left:532px;top:424px;font-size:11px;line-height:14px;color:#000;letter-spacing:-0.038px;">Vector text</span>
<div class="cb" style="left:591px;top:425px;width:13px;height:13px;"></div>
<span class="t d" style="left:609.3px;top:424px;font-size:11px;line-height:14px;color:#000;letter-spacing:-0.274px;">Filter drawing origin</span>
<div class="cb" style="left:703px;top:425px;width:13px;height:13px;"></div>
<span class="t d" style="left:721.6px;top:424px;font-size:11px;line-height:14px;color:#000;letter-spacing:-0.144px;">Filter header/footer</span>
<div class="cb" style="left:514px;top:447px;width:13px;height:13px;"><svg style="left:0.8px;top:1px" width="9" height="9" viewBox="0 0 9 9"><path d="M1 3v3l2.200 2.200l4.700-4.700v-3l-4.700 4.700z" fill="#000"/></svg></div>
<span class="t d" style="left:532px;top:446px;font-size:11px;line-height:14px;color:#000;letter-spacing:-0.250px;">Property Options</span>
<div class="cb" style="left:535px;top:469px;width:13px;height:13px;"><svg style="left:0.8px;top:1px" width="9" height="9" viewBox="0 0 9 9"><path d="M1 3v3l2.200 2.200l4.700-4.700v-3l-4.700 4.700z" fill="#000"/></svg></div>
<span class="t d" style="left:553.4px;top:468px;font-size:11px;line-height:14px;color:#000;letter-spacing:-0.253px;">Comp Tree</span>
<div class="cb" style="left:619px;top:469px;width:13px;height:13px;"><svg style="left:0.8px;top:1px" width="9" height="9" viewBox="0 0 9 9"><path d="M1 3v3l2.200 2.200l4.700-4.700v-3l-4.700 4.700z" fill="#000"/></svg></div>
<span class="t d" style="left:637.5px;top:468px;font-size:11px;line-height:14px;color:#000;letter-spacing:0.016px;">Net Tree</span>
<div class="cb" style="left:689px;top:469px;width:13px;height:13px;"></div>
<span class="t d" style="left:707.6px;top:468px;font-size:11px;line-height:14px;color:#000;letter-spacing:0.021px;">TestPoint Tree</span>
<div class="cb" style="left:535px;top:491px;width:13px;height:13px;"><svg style="left:0.8px;top:1px" width="9" height="9" viewBox="0 0 9 9"><path d="M1 3v3l2.200 2.200l4.700-4.700v-3l-4.700 4.700z" fill="#000"/></svg></div>
<span class="t d" style="left:553.4px;top:490px;font-size:11px;line-height:14px;color:#000;letter-spacing:-0.253px;">Pin</span>
<div class="cb" style="left:584px;top:491px;width:13px;height:13px;"></div>
<span class="t d" style="left:602px;top:490px;font-size:11px;line-height:14px;color:#000;letter-spacing:0.048px;">Via</span>
<div class="cb" style="left:633px;top:491px;width:13px;height:13px;"></div>
<span class="t d" style="left:651.5px;top:490px;font-size:11px;line-height:14px;color:#000;letter-spacing:-0.445px;">Cline</span>
<div class="cb" style="left:689px;top:491px;width:13px;height:13px;"></div>
<span class="t d" style="left:707.6px;top:490px;font-size:11px;line-height:14px;color:#000;letter-spacing:-0.153px;">Shape</span>
<div class="cb" style="left:514px;top:513px;width:13px;height:13px;"></div>
<span class="t d" style="left:532px;top:512px;font-size:11px;line-height:14px;color:#000;letter-spacing:-0.136px;">Security</span>
<span class="t d" style="left:535.4px;top:536px;font-size:11px;line-height:14px;color:#000;letter-spacing:-0.203px;">Document open password:</span>
<div class="edit" style="left:676px;top:533.5px;width:147.5px;height:18px;background:#f0f0f0;"></div>
<span class="t d" style="left:535.4px;top:557.5px;font-size:11px;line-height:14px;color:#000;letter-spacing:-0.355px;">Permissions password:</span>
<div class="edit" style="left:676px;top:556px;width:147.5px;height:18px;background:#f0f0f0;"></div>
<div class="cb" style="left:514px;top:579px;width:13px;height:13px;"></div>
<span class="t d" style="left:532.6px;top:578px;font-size:11px;line-height:14px;color:#000;letter-spacing:-0.150px;">Output PDF in black and white mode</span>
<div class="cb" style="left:514px;top:600px;width:13px;height:13px;"></div>
<span class="t d" style="left:532.6px;top:599.6px;font-size:11px;line-height:14px;color:#000;letter-spacing:-0.225px;">Create separate PDF file for each art film</span>
<div class="cb" style="left:514px;top:622px;width:13px;height:13px;"></div>
<span class="t d" style="left:532.6px;top:621.7px;font-size:11px;line-height:14px;color:#000;letter-spacing:-0.265px;">Create PDF optimized for print (no meta data but smaller files)</span>
<div class="cb" style="left:514px;top:645px;width:13px;height:13px;"></div>
<span class="t d" style="left:532.6px;top:644px;font-size:11px;line-height:14px;color:#000;letter-spacing:-0.160px;">Display Component by RefDes without the package name</span>
<div class="cb" style="left:507px;top:679px;width:13px;height:13px;"><svg style="left:0.8px;top:1px" width="9" height="9" viewBox="0 0 9 9"><path d="M1 3v3l2.200 2.200l4.700-4.700v-3l-4.700 4.700z" fill="#000"/></svg></div>
<span class="t d" style="left:525px;top:677.5px;font-size:11px;line-height:14px;color:#000;letter-spacing:-0.139px;">Launch PDF Viewer</span>
<!-- bottom -->
<div style="left:0px;top:686px;width:900px;height:9px;background:#f3f3f3;border-top:1px solid #c5c5c5;"></div>
<div style="left:30px;top:687px;width:820px;height:9px;background:linear-gradient(#fafafa,#e4e4e4);border:1px solid #9a9a9a;border-bottom:none;border-radius:2px 2px 0 0;"></div>
<div style="left:0px;top:686px;width:17px;height:9px;background:#fff;"></div>
<svg style="left:18px;top:688px" width="6" height="7" viewBox="0 0 6 7"><path d="M5 0.5L0.5 5.5L5 10Z" fill="#333"/></svg>
<div style="left:436.5px;top:690.5px;width:1px;height:5px;background:#444;"></div>
<div style="left:439px;top:690.5px;width:1px;height:5px;background:#444;"></div>
<div style="left:441.5px;top:690.5px;width:1px;height:5px;background:#444;"></div>
<!-- anno -->
<svg style="left:0px;top:0px" width="900" height="695" viewBox="0 0 900 695"><g fill="none" stroke="#ea1820" stroke-width="2.100" stroke-linecap="round" stroke-linejoin="round"><path d="M1.500 24.500C2 17 5 9 12 4.500C19 1 30 1 38 2.500C46 4 52 6.500 53.500 11C55 15 55 21 54.500 25.500C54 29 51 29 46 28.500C36 27.500 24 26.500 16 24.700C12 23.800 9 23 7.500 22"/><path d="M24.700 159C27 154 31 147.500 37 143.500C45 142 60 142.300 72 143C80 143.500 86 144 87.500 145C90 152 93.500 162 96 168C97 170 98 171 98.500 171.500"/><path d="M24.700 159C26 160.500 28 161.500 30 161.800C42 163.500 60 165 75 167.500C84 168.800 92 169.800 96.500 170.500"/><path d="M236.500 322C235 317 234 311 233.700 306.800C240 305.500 250 305 256 305C262 305 268 305.800 271 306.800C272.500 311 273.700 316 274.500 320.500"/><path d="M235 318.300C245 318 262 318 273.700 318.300"/></g><g fill="none" stroke="#ea1820" stroke-linecap="round" stroke-linejoin="round"><path d="M597 153.500C620 151.500 650 154 692 158.500" stroke-width="7"/><path d="M598 158.500C640 160.500 680 160.500 722 158.500" stroke-width="8"/><path d="M640 162C680 163.500 720 162.500 758 159.500" stroke-width="5.500"/><path d="M690 156C720 153.500 745 154 764 156.500" stroke-width="5"/><path d="M585 157.800L604 157M740 155.200L771.500 155.500M608 150.500C625 149.500 640 150 654 151.500M577.500 158.200L590 158" stroke-width="1.600"/></g></svg>
</div></body></html>
